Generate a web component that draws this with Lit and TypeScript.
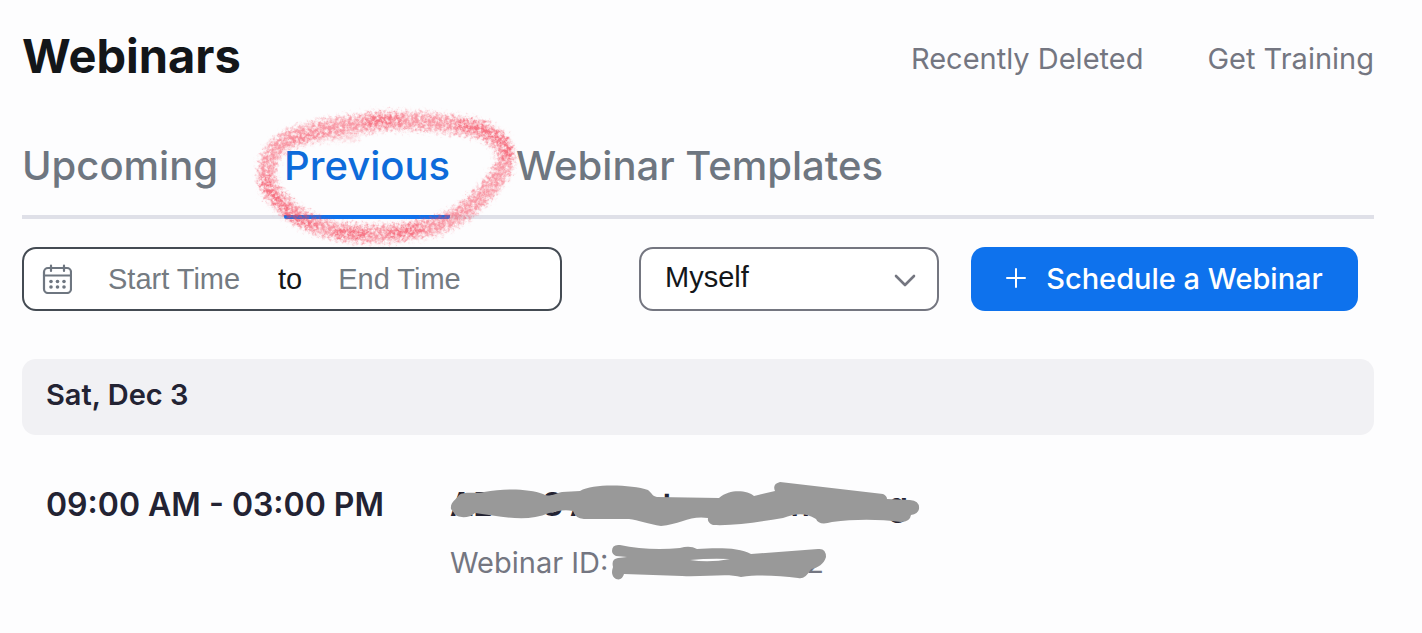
import { LitElement, html, css, svg } from "lit";
import { customElement, state } from "lit/decorators.js";

const TABS = ["Upcoming", "Previous", "Webinar Templates"];

@customElement("crayon-ring")
class CrayonRing extends LitElement {
  static styles = css`
    :host { display: block; pointer-events: none; }
    svg { display: block; width: 280px; height: 150px; mix-blend-mode: multiply; }
  `;

  render() {
    return html`<svg viewBox="246 102 280 150" aria-hidden="true">
      <defs>
        <filter id="grain" filterUnits="userSpaceOnUse" x="246" y="102" width="280" height="150" color-interpolation-filters="sRGB">
          <feGaussianBlur in="SourceGraphic" stdDeviation="2" result="soft" />
          <feTurbulence type="fractalNoise" baseFrequency="0.3" numOctaves="3" seed="8" result="noise" />
          <feDisplacementMap in="soft" in2="noise" scale="12" xChannelSelector="R" yChannelSelector="G" result="rough" />
          <feColorMatrix in="noise" type="matrix" values="0 0 0 0 0  0 0 0 0 0  0 0 0 0 0  0 0 2 0 -0.25" result="mask" />
          <feComposite in="rough" in2="mask" operator="in" />
          <feGaussianBlur stdDeviation="0.7" />
        </filter>
      </defs>
      <g filter="url(#grain)" fill="none" stroke="#f4475c" stroke-linecap="round" stroke-linejoin="round">
        <path stroke-width="17" opacity=".54" d="M372 123C340 124 300 131 280 143C264 156 260 176 270 192C284 211 306 226 340 232C378 237 418 232 444 222C472 208 488 190 500 170C510 150 498 138 480 130C450 122 405 120 368 121" />
        <path stroke-width="9" opacity=".2" d="M292 142Q318 134 352 137" />
        <path stroke-width="8" opacity=".5" d="M368 121Q382 119 396 121M460 125Q488 129 501 142Q508 150 504 158M262 180Q268 194 284 210Q296 221 312 226M336 232Q352 235 366 233M390 232Q404 234 418 228" />
      </g>
    </svg>`;
  }
}

@customElement("app-root")
class AppRoot extends LitElement {
  @state() private active = "Previous";

  static styles = css`
    :host {
      display: block;
      min-height: 100vh;
      box-sizing: border-box;
      padding: 28px 48px 48px 22px;
      background: #fdfdfe;
      color: #232333;
      font-family: Inter, "Liberation Sans", sans-serif;
    }
    * { box-sizing: border-box; }
    button, input, select { font: inherit; margin: 0; padding: 0; border: 0; background: none; }

    .header { display: flex; align-items: center; justify-content: space-between; }
    h1 { margin: 0; color: #131619; font-size: 47px; line-height: 56px; font-weight: 700; }
    .links { display: flex; gap: 64px; padding-top: 6px; }
    .links a { color: #747681; font-size: 29px; line-height: 36px; text-decoration: none; }

    .tabs { display: flex; gap: 66px; margin-top: 48px; border-bottom: 4px solid #dfe0e8; }
    .tab {
      position: relative;
      height: 87px;
      margin-bottom: -4px;
      padding-bottom: 16px;
      border-bottom: 4px solid transparent;
      color: #6e7680;
      font-size: 40px;
      line-height: 48px;
      font-weight: 500;
      white-space: nowrap;
      cursor: pointer;
    }
    .tab.active { border-color: #0e72ed; border-radius: 2px; color: #0e6bda; }
    crayon-ring { position: absolute; left: -36px; top: -30px; z-index: 1; }

    .toolbar { display: flex; align-items: center; gap: 32px; margin-top: 28px; padding-right: 16px; }
    .range {
      display: flex;
      align-items: center;
      width: 540px;
      height: 64px;
      margin-right: auto;
      padding: 0 18px;
      border: 2px solid #444b53;
      border-radius: 14px;
      background: #fff;
      color: #131619;
      font-family: "Liberation Sans", Arial, sans-serif;
      font-size: 29px;
    }
    .range svg { width: 30px; height: 30px; margin-right: 36px; flex: none; }
    .range input { width: 134px; height: 40px; outline: 0; color: #131619; }
    .range input::placeholder { color: #747b82; opacity: 1; }
    .range span { margin: 0 36px; }
    .who { position: relative; width: 300px; }
    .who select {
      appearance: none;
      width: 100%;
      height: 64px;
      padding: 0 56px 4px 24px;
      border: 2px solid #747680;
      border-radius: 14px;
      background: #fff;
      color: #131619;
      font-family: "Liberation Sans", Arial, sans-serif;
      font-size: 29px;
    }
    .who svg { position: absolute; right: 22px; top: 26px; width: 24px; height: 16px; pointer-events: none; }
    .schedule {
      display: flex;
      align-items: center;
      justify-content: center;
      gap: 20px;
      width: 387px;
      height: 64px;
      padding-bottom: 2px;
      border-radius: 14px;
      background: #0e72ed;
      color: #fff;
      font-size: 29px;
      font-weight: 500;
      white-space: nowrap;
      cursor: pointer;
    }
    .schedule svg { width: 20px; height: 20px; }

    .day { margin: 48px 0 0; padding: 18px 24px 22px; border-radius: 14px; background: #f1f1f4; font-size: 29px; line-height: 36px; font-weight: 600; }
    .row { display: grid; grid-template-columns: 404px 1fr; padding: 48px 24px 0; }
    .time { font-size: 32px; line-height: 44px; font-weight: 600; white-space: nowrap; }
    .info { position: relative; display: grid; gap: 18px; justify-items: start; }
    .name { display: grid; grid-template-columns: 92px 28px 92px 120px 1fr auto; margin: 0; width: 458px; font-size: 32px; line-height: 44px; font-weight: 600; }
    .id { display: flex; width: 374px; justify-content: space-between; color: #747681; font-size: 29px; line-height: 36px; }
    .marker { position: absolute; left: 0; top: -10px; width: 480px; height: 120px; pointer-events: none; }
  `;

  private calendar = svg`<g fill="none" stroke="#6e7680" stroke-width="2.2" stroke-linecap="round">
    <rect x="2" y="4" width="27" height="25" rx="4" /><path d="M2 11.5H29M9 1.5V7M22 1.5V7" /></g>
    <g fill="#6e7680">${[17.5, 23].map((y) => [9, 15.5, 22].map((x) => svg`<circle cx=${x} cy=${y} r="1.8" />`))}</g>`;

  render() {
    return html`
      <header class="header">
        <h1>Webinars</h1>
        <nav class="links"><a href="#deleted">Recently Deleted</a><a href="#training">Get Training</a></nav>
      </header>
      <div class="tabs" role="tablist">
        ${TABS.map((name) => html`<button
          class="tab ${name === this.active ? "active" : ""}"
          role="tab"
          aria-selected=${name === this.active}
          @click=${() => (this.active = name)}
        >${name}${name === "Previous" ? html`<crayon-ring></crayon-ring>` : ""}</button>`)}
      </div>
      <div class="toolbar">
        <div class="range">
          <svg viewBox="0 0 30 30" aria-hidden="true">${this.calendar}</svg>
          <input aria-label="Start Time" placeholder="Start Time" />
          <span>to</span>
          <input aria-label="End Time" placeholder="End Time" />
        </div>
        <div class="who">
          <select aria-label="Host"><option>Myself</option></select>
          <svg viewBox="0 0 24 16" fill="none" stroke="#747680" stroke-width="2.6" stroke-linecap="round" stroke-linejoin="round" aria-hidden="true"><path d="M3 3L12 12L21 3" /></svg>
        </div>
        <button class="schedule">
          <svg viewBox="0 0 20 20" stroke="#fff" stroke-width="2" stroke-linecap="round" aria-hidden="true"><path d="M1 10H19M10 1V19" /></svg>
          Schedule a Webinar
        </button>
      </div>
      <h2 class="day">Sat, Dec 3</h2>
      <section class="row">
        <div class="time">09:00 AM - 03:00 PM</div>
        <div class="info">
          <h3 class="name"><span>AE</span><span>S</span><span>A</span><span>t</span><span>in</span><span>g</span></h3>
          <div class="id"><span>Webinar ID:</span><span>2</span></div>
          <svg class="marker" viewBox="450 472 480 120" fill="#999" aria-hidden="true">
            <path d="M451 508C450 501 456 499 459 494C464 490 475 493 484 491C505 487 530 488 543 493C551 497 556 492 562 491L580 490C594 482 632 484 648 489C653 493 652 495 657 496L719 497C731 487 748 490 754 495L775 490Q772 483 780 481L883 493Q887 495 887 498L910 499Q920 500 919 508Q918 513 911 514Q910 521 901 521C878 518 855 518 832 521Q819 525 816 518C804 511 795 513 783 517C758 521 734 525 713 524Q707 522 708 517C691 514 680 523 661 525C649 523 638 519 629 518L584 518Q575 517 573 510C562 508 557 511 549 512C526 522 500 515 475 512C469 518 456 517 454 512Z" />
            <path fill-rule="evenodd" d="M612 550Q612 543 620 544C638 548 660 549 680 547Q690 544 697 548C715 547 739 546 751 553L818 548Q826 547 826 556C824 563 818 567 811 568Q805 579 798 577C780 575 760 573 741 576C728 572 706 576 682 575L624 573Q622 580 616 578Q610 575 613 566Q611 558 618 557L627 556L616 555Q612 553 612 550ZM690 559Q710 557 730 558Q710 562 690 559Z" />
          </svg>
        </div>
      </section>
    `;
  }
}
